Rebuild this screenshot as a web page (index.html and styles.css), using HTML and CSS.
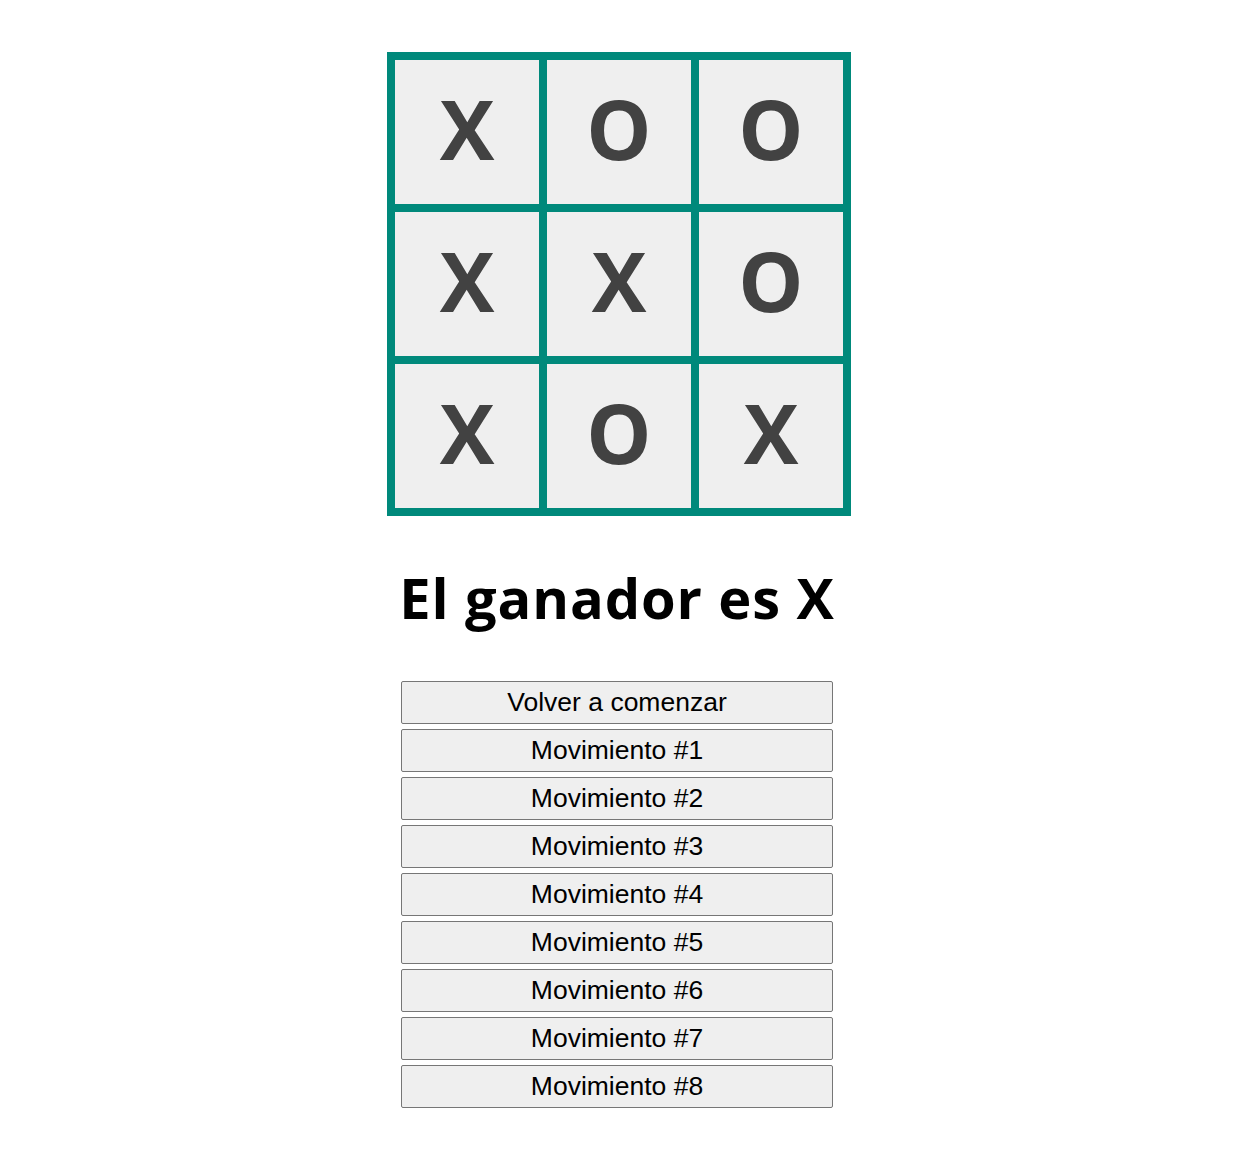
FILE: index.html
```html
<!DOCTYPE html>
<html lang="es">
<head>
<meta charset="utf-8">
<title>Tres en raya</title>
<link rel="stylesheet" href="styles.css">
</head>
<body>
<main class="game">
  <div class="board">
    <button class="cell">X</button>
    <button class="cell">O</button>
    <button class="cell">O</button>
    <button class="cell">X</button>
    <button class="cell">X</button>
    <button class="cell">O</button>
    <button class="cell">X</button>
    <button class="cell">O</button>
    <button class="cell">X</button>
  </div>
  <h1 class="status">El ganador es X</h1>
  <ol class="moves">
    <li><button class="move">Volver a comenzar</button></li>
    <li><button class="move">Movimiento #1</button></li>
    <li><button class="move">Movimiento #2</button></li>
    <li><button class="move">Movimiento #3</button></li>
    <li><button class="move">Movimiento #4</button></li>
    <li><button class="move">Movimiento #5</button></li>
    <li><button class="move">Movimiento #6</button></li>
    <li><button class="move">Movimiento #7</button></li>
    <li><button class="move">Movimiento #8</button></li>
  </ol>
</main>
</body>
</html>
```
FILE: styles.css
```css
html, body {
  margin: 0;
  padding: 0;
  background: #ffffff;
}

.game {
  display: flex;
  flex-direction: column;
  align-items: center;
  padding: 52px 9px 0 0;
}

.board {
  display: grid;
  grid-template-columns: repeat(3, 152px);
  grid-template-rows: repeat(3, 152px);
  border: 4px solid #00897b;
  margin-left: 4px;
}

.cell {
  box-sizing: border-box;
  width: 152px;
  height: 152px;
  margin: 0;
  padding: 0 0 9px 0;
  border: 4px solid #00897b;
  background: #efefef;
  color: #424242;
  font-family: "Open Sans", "Noto Sans", sans-serif;
  font-weight: 700;
  font-size: 82px;
  line-height: 1;
}

.status {
  margin: 48px 0 0 0;
  font-family: "Open Sans", "Noto Sans", sans-serif;
  font-weight: 700;
  font-size: 56px;
  letter-spacing: 0.9px;
  line-height: 1.2;
  color: #000000;
}

.moves {
  list-style: none;
  margin: 50px 0 0 0;
  padding: 0;
  display: flex;
  flex-direction: column;
  gap: 5px;
}

.move {
  box-sizing: border-box;
  width: 432px;
  height: 43px;
  margin: 0;
  padding: 0;
  border: 1px solid #767676;
  border-radius: 2px;
  background: #efefef;
  color: #000000;
  font-family: "Liberation Sans", Arial, sans-serif;
  font-size: 26.5px;
  line-height: 1;
}
```
